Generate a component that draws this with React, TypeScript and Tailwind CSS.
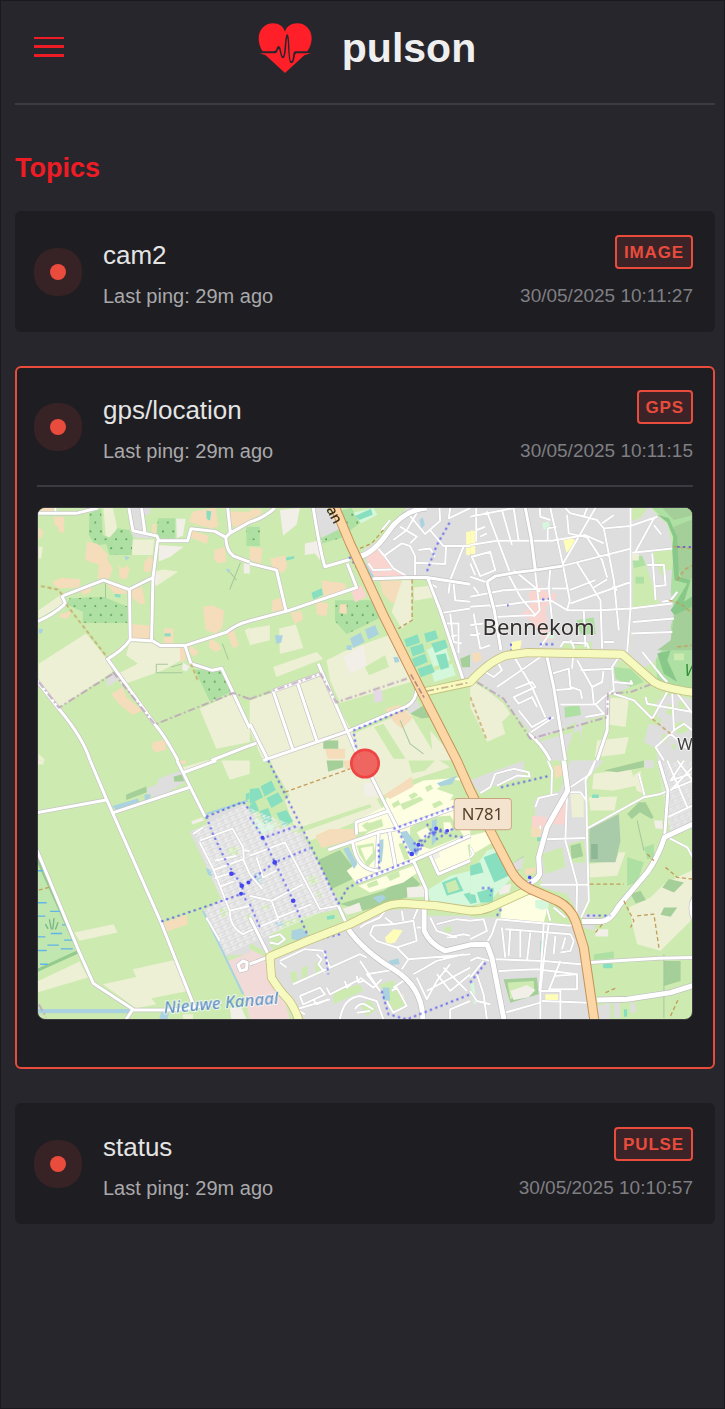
import { useState } from "react";

const FARM = "#edf0d5";
const GREY = "#dfdedf";
const YARD = "#f5dcba";
const ORCHARD = "#aedfa3";
const WOOD = "#a5cf98";
const PITCH = "#88dfc0";
const PARK = "#d5f7dc";
const CAMPUS = "#fefee3";
const WATER = "#aad3df";
const RETAIL = "#fad5d0";
const ESTATE = "#f2dad9";
const PALE = "#f2efe9";
const GRASS = "#cdebb0";

type Tile = {
  x: number;
  y: number;
  areas: [string, string][];
  streets: string[];
  roads: string[];
  cycle: string[];
  border: string[];
  track: string[];
};

const tiles: Tile[] = [
  {
    x: 0,
    y: 0,
    areas: [
      [FARM, "M28 490 170 400 235 480 250 515 90 622 28 545ZM300 425 370 430 390 440 465 440 455 480 400 510 275 555 265 520 325 490 290 465ZM222 24h28l12 55-8 32h-25ZM308 118h66l-5 47h-61ZM28 330 100 280 105 310 28 355ZM375 215 400 208 446 214 380 258ZM510 625 610 580 660 690V725L560 745ZM28 140h12l-4 35h-8ZM28 760l20 20H28ZM645 390l15-8v50Z"],
      [GREY, "M300 24H362V42L345 46 350 92 368 115 315 112 303 92ZM232 535l25-18 12 20-35 22Z"],
      [ORCHARD, "M180 40 215 26 220 105 240 112 265 85 300 90 310 112 306 165H240L230 132 198 136 178 105ZM120 295 220 290 295 320V368H160V335L110 312ZM385 55h52v60h-57ZM495 508 570 505 605 575 540 602ZM650 80h10v58h-10Z"],
      [YARD, "M28 24h45v10H28ZM74 50h30v47H90l-5-17-10-5ZM28 80l14 14-5 20h-9ZM172 125l30 5 35 35-5 12 18 28-10 30h-36l5-40-42-15ZM268 195l12 12 15-12 5 15-10 28-20-5ZM345 185l18-20 8 25-12 28-18-5ZM68 245l28-12 58 4-5 25-65 2ZM150 270l40-12-10 20-18 6ZM230 250l55 18 10 12-40 2ZM305 268l32-8 10 50-15 2-25-20ZM308 372l52 4 10 45-62-4ZM403 385h28v45h-28ZM520 320l28-4 35 15-5 50-20 20-30-12ZM588 388l22-3 17 50-17 10ZM540 415l20 10 16 20-20 10-18-14ZM450 442l18 4v34l-16 5ZM480 432l28 25-15 12-12-12ZM488 35l70-12 8 55-20 8-68-20ZM482 90l55 18-6 24-48-20ZM600 34l60 2v32l-40 15-20-15ZM555 150l30-10 4 45-22 5-15-12ZM245 582l35-22 10 30 48 40-30 14-40-35ZM370 725l38-7v30l-28 8-14-14ZM90 342l38-10-15 25-22-6ZM368 72h12v30h-12Z"],
      [PALE, "M440 56h28l-8 50-18 8ZM387 135l75 5-40 30-34 14ZM642 190h18v30h-18ZM375 218l18 8-18 32ZM458 485l22 14-10 14-12-4Z"],
      [PITCH, "M530 32l15 2-4 28-10-6ZM256 281l18 2-2 10-16-3ZM405 399h18v10h-18Z"],
      [WATER, "M285 168l16 4-12 9ZM28 385l14 2-5 12h-9ZM588 205l14 4-6 10Z"],
    ],
    streets: ["M78 24V38"],
    roads: [
      "M20 40H140L205 24",
      "M298 24 310 92 382 108 388 122H474L484 86 556 94 588 112 600 100 660 66",
      "M336 24 346 98",
      "M594 24 602 100",
      "M588 112Q590 155 612 168L660 186",
      "M384 122 370 235 366 420",
      "M20 366Q70 345 108 310L98 288 222 240 298 268 370 232",
      "M300 268 302 418 370 422 392 436H466L590 396Q620 372 660 362",
      "M302 418Q280 450 234 476L376 672Q405 705 445 780",
      "M466 436 484 490 548 510 576 504 660 684",
      "M20 538 88 625Q160 710 182 780",
      "M545 780 660 735",
    ],
    cycle: [],
    border: ["M28 545 88 622 250 520", "M250 515 376 672 610 578 660 596"],
    track: ["M35 258 85 268 100 285", "M110 312 234 472", "M484 490 506 545"],
  },
  {
    x: 660,
    y: 0,
    areas: [
      [FARM, "M0 385l60-10 0 45-60 15ZM88 385l50-12 22 70-70 18ZM70 500l130-45 20 20-140 55ZM0 600 190 530 215 520 260 610 310 700 340 780H40L0 690ZM230 480l60-30 140-50 70 140-230 68-30-70ZM310 700l165-70 90 150H330ZM540 690l80 90h-70Z"],
      [GRASS, "M300 610 430 560 435 590 370 625 310 620ZM345 500l60-35 12 35-60 25ZM400 310l30-5 15 25-30 10ZM372 680l28-10 70 110h-36Z"],
      [ORCHARD, "M0 80h30v58H0ZM255 300l120 0 20 50-105 52-35-40ZM215 100l60-34 22 40-85 26ZM260 34l45-10 25 45-38 28Z"],
      [GREY, "M190 24h40l45 60-60 30ZM470 24H660V560L640 535 550 300 530 235 360 238 340 150 400 110 440 58ZM470 610l30-10 15 30-40 10Z"],
      [YARD, "M0 28l35 0 0 15-35 15ZM0 140l38 5-5 45-33-10ZM62 175l45-8 5 35-15 18-32-22ZM215 240l70 10 5 20-70 20ZM200 305l35 5-5 38-30-5ZM68 300l25-8 18 35-45 8ZM122 338l32-6 6 25-25 14ZM405 625l45-12 38 40-32 32-25-20ZM225 745l60 0 0 35h-50ZM270 312l20 0 0 30-22-4Z"],
      [RETAIL, "M305 275l30-20 15 35-35 16ZM350 165l30-20 50 55 40 28-110 4Z"],
      [PALE, "M90 30l60-6-10 50-40 32ZM165 130l50-10-5 60-15-20-30 5ZM280 470l60-35 10 60-50 25ZM440 24l-15 20-18 24Z"],
      [PARK, "M310 38l60-14 12 20-48 26Z"],
      [PITCH, "M315 48l48-22 5 18-40 16ZM185 278l30-14 5 20-30 14ZM108 172l25-4v8l-24 5Z"],
      [WATER, "M300 415l32-18 12 28-34 18ZM345 388l30-14 12 28-32 16ZM290 435h15v14h-15ZM335 190l8-5 30 45-8 5ZM508 60l10-8 6 22-10 12ZM75 405l24 0-5 22-14 4ZM430 470l14 0 4 15-14 2Z"],
      ["#e5d9e6", "M370 572l26-4 2 34-24 6Z"],
      [WOOD, "M480 640l40-25 25 35-30 4ZM630 475l30-12v38h-25ZM220 720h45v25h-45Z"],
      [GRASS, "M390 240h150l35 90 60 200-85 12-60-100-40-60-30-80Z"],
      [YARD, "M390 242l64 0 2 55-30 12-28-30Z"],
      [FARM, "M456 240h29v120l-30 25-30-50ZM490 262l50-5 8 35-55 10Z"],
      [PARK, "M545 515l60-25 12 35-65 20ZM530 450l50-30 20 60-50 20Z"],
      [PITCH, "M462 418l40-16 8 25-40 14ZM480 442l38-12 6 25-36 14ZM485 475l40-15 8 25-38 16ZM502 505l42-14 10 24-42 16ZM522 400l34-10 8 25-35 12ZM543 430l42-12 8 24-38 16ZM557 465l30-6 10 42-25 8Z"],
      [GRASS, "M530 580 660 560V780H630Z"],
      ["#fefeb8", "M648 95h12v70h-12Z"],
    ],
    streets: [
      "M405 165 455 130 480 138 495 168V225",
      "M380 140 405 170 430 205 470 228",
      "M355 190 370 210 425 208",
      "M395 90 420 60",
      "M478 45 525 102 570 62 568 24",
      "M495 188 585 192 588 135",
      "M540 90 580 138H660",
      "M500 40 470 90 430 120",
      "M600 24 596 55 660 24",
      "M640 140 600 240 595 280",
      "M610 245 615 300 660 305",
      "M575 338 660 325",
      "M600 340 610 425 635 430",
      "M590 370H625V458",
      "M595 410 620 405",
      "M540 250 560 262",
      "M450 80 500 110 480 130",
      "M505 150 540 145 555 170",
    ],
    roads: [
      "M0 66Q40 55 75 24",
      "M190 24Q210 150 225 200L300 178",
      "M0 190 80 210 108 330",
      "M0 362 120 330 320 262 292 190",
      "M368 236 470 232 530 232 660 252",
      "M532 232 570 330 638 535",
      "M205 490 330 780",
      "M70 572 215 520",
      "M70 572 130 750",
      "M142 545 202 725",
      "M0 670 55 780",
      "M0 735 20 728",
      "M40 780 295 692 470 618Q500 600 500 560",
    ],
    cycle: ["M598 68 560 135 530 215", "M310 690 470 625", "M312 700 320 750", "M298 170 390 295"],
    border: ["M0 596 212 520 258 606 470 535", "M480 520 520 590"],
    track: ["M486 238V360L445 385", "M330 145 365 130 400 90"],
  },
  {
    x: 1320,
    y: 0,
    areas: [
      [GREY, "M0 24H480V560L415 585 410 645 330 660 200 720 100 600 20 540 0 545Z"],
      [GREY, "M480 24h60l50 50 20 75-5 120 15 80-22 110-118 65ZM320 660h90l-30 120h-100ZM200 725l40 55 100 0-10-90Z"],
      [ORCHARD, "M545 24H670V580L560 540 555 480 575 445 605 430 600 380 612 330 600 275 608 160 610 120 590 70Z"],
      [WOOD, "M575 24h95v20L610 60ZM610 80 670 56V230L640 250 612 180ZM610 350 670 286V450H560L600 420Z"],
      ["#88c888", "M560 44 590 66 608 110 604 150 612 240 650 250 620 300 600 330 612 345 670 316V285L640 305 660 240 625 230 620 110 595 55ZM560 460 600 450 590 480 620 545 580 520Z"],
      [GRASS, "M480 24h50l-20 30-28 10ZM545 150h60v60h-20l-10 20-20-40ZM487 190l35-10 30 90 15 40-80 15ZM275 425h90v35h-90ZM610 460h30v20h-30ZM440 480l40 10 50 50-30 20-60-20ZM335 670l80-20 30-65 60 10 50 60 0 85-40 40H335Z"],
      [ORCHARD, "M485 172l30-6 10 30-35 8ZM495 230h25v20h-25ZM430 500l50 5 40 40-40 15-45-25ZM318 360l52-8 6 50h-45ZM282 620l45-6 5 30-48 8Z"],
      [FARM, "M0 540 50 570 100 610 120 640 95 665 105 700 50 725 20 660 0 620ZM420 592l55 3-10 85-50-8ZM380 720l95-10-12 50-90 10ZM485 160l20-4v25h-20Z"],
      [GRASS, "M0 640 55 730 105 705 200 725 240 780H0Z"],
      [RETAIL, "M145 345l35-20-5-45 30-25 30 25 25 0-10 25-25 15 5 60 20 35-25 10-50-70ZM170 320l30 5-5 15-25-5Z"],
      ["#fefeb8", "M278 115l18-5 26 14-14 16-20 18ZM122 425l32-5-4 25-26 8ZM0 92h15v70H0Z"],
      [PARK, "M215 70l20-6 5 20-20 6ZM230 395l20 0v20h-20Z"],
      [YARD, "M5 460l25-5 5 25-25 8Z"],
      [GREY, "M535 670l30 5-5 70-40-20ZM560 600l50-20 60 20V780H560Z"],
      [GRASS, "M590 610l25 5-10 30-18-5ZM625 600l22 4-4 26-20-4ZM610 670l30-8 15 30-35 10ZM575 700l20 5-8 22-15-4ZM560 650l14 8-8 20ZM600 730l18 5-8 16Z"],
    ],
    streets: [
      "M0 50 130 24", "M18 24V125", "M50 34 120 220", "M95 30 125 135", "M130 24 145 120",
      "M0 135 80 122H245L345 105 400 130", "M208 24 210 50 240 60", "M240 24 278 195", "M232 120V85L258 80",
      "M285 24 300 40 380 60 400 85 480 78 560 50", "M400 85 430 240 445 390", "M290 45 295 100 350 112 395 180 410 232",
      "M375 24 278 190", "M275 198 482 145", "M182 110 208 330 190 350", "M278 195 298 300 290 330", "M240 205 235 260 245 360",
      "M110 215 150 290 195 345", "M130 210 210 275", "M320 188 390 300 395 445", "M370 262 410 238", "M298 270 375 240",
      "M300 310 482 245", "M0 290 100 270 240 265", "M245 265H295", "M170 305 240 300 290 330 H390L482 325",
      "M480 24V325L470 455", "M482 400 605 395", "M487 365 610 355", "M482 325 605 310", "M545 160 555 300", "M530 195 580 195 585 255 555 258",
      "M485 158 605 145", "M495 155 550 55", "M550 75 572 103", "M575 305 600 300 620 275",
      "M60 320 170 305", "M70 350 190 345", "M0 320 60 315", "M10 340 30 445 60 435", "M0 375 40 370", "M60 250 0 230",
      "M5 170 60 155 75 210 30 228Z", "M0 190 15 225", "M20 90 45 80 M30 110 50 100", "M10 260 25 280", "M135 475 185 560 225 650", "M80 560 210 470",
      "M45 515 70 530 95 510 85 490", "M135 565 185 545 195 560 130 590 145 610 185 590 200 620", "M145 630 185 680 230 655", "M175 700 250 650",
      "M245 520 295 505 300 560 330 570 335 595", "M320 480 365 560 370 610", "M250 570 305 565", "M270 612 375 612 400 590 430 570 425 500 445 470",
      "M330 510 430 505", "M365 560 395 545 400 505", "M375 612 400 640 345 650", "M305 505 310 440 300 420", "M270 440 280 425 350 430 355 445",
      "M400 425H430", "M430 545 485 550 480 540", "M515 455 575 530 590 545", "M430 580 490 600 545 655 590 575", "M525 590 530 610 666 635", "M605 580 610 690",
      "M620 580 666 640", "M610 690 555 740 580 780", "M610 690 640 670 666 690", "M600 700 650 745", "M395 70 430 45", "M340 50 350 24", "M425 260 440 270",
      "M340 330 345 440", "M0 405 30 400", "M210 440 245 390",
    ],
    roads: [
      "M165 24 182 110 195 210",
      "M50 245 75 228 130 218 195 210 275 198",
      "M50 245 72 330 92 450",
      "M230 470 250 560 285 780",
      "M412 590 410 690 380 780",
      "M175 700Q215 730 240 780",
    ],
    cycle: ["M620 140H666", "M235 655 250 650", "M208 432H255", "M122 430V450", "M110 315 115 315", "M215 298 235 296"],
    border: ["M20 545 100 595 180 715 270 690 410 650 412 580 480 575 550 548"],
    track: ["M0 590 50 720", "M610 140 666 145", "M595 300 630 310 666 340", "M620 440 666 435", "M620 240 640 210 666 195", "M545 655 600 700"],
  },
  {
    x: 0,
    y: 780,
    areas: [
      [FARM, "M575 0H660V40L600 58ZM460 20 530 0 555 0 465 35ZM135 515 252 490 264 515 150 540ZM220 670 320 648 310 625 432 598 475 690 365 712 380 730 320 742ZM20 664 150 602 175 650 20 696ZM20 0h23v12H20Z"],
      [GREY, "M350 85 385 70V55L455 30 465 65 385 112 355 102ZM480 212 530 195 535 165 640 130 660 140V580L580 585 520 450 575 415Z"],
      [WOOD, "M290 102 350 78 352 95 290 118ZM432 48l24-6 8 20-30 2Z"],
      [YARD, "M402 485 470 462 475 490 412 512ZM450 0h20v10h-18Z"],
      [ESTATE, "M595 600 660 575V780H700L690 830 660 780 645 700Z"],
      [WATER, "M248 136 325 114 330 126 260 150ZM345 102l20 0-8 16h-12ZM20 744 310 744V757H20ZM528 322l16 6 8 20-16-5ZM395 752l24 5-6 18-24-2Z"],
      ["#c0e7b0", "M20 285 145 570 20 620Z"],
      [PALE, "M485 182 520 170 522 180 488 192ZM600 740h35l15 34h-45Z"],
      [PITCH, "M648 100l12-5v20l-12 4Z"],
      [GRASS, "M590 265l30-10 10 20-25 22ZM570 445l20-5 4 20-20 12ZM650 460l10-5v25h-10Z"],
      [FARM, "M460 760h30v14h-30Z"],
    ],
    streets: [
      "M510 240 608 204 640 260 642 295 552 328 510 245", "M642 268 660 272", "M640 295 660 340", "M556 352 610 335", "M570 378 612 362",
      "M552 328 600 450 660 435", "M600 450Q600 500 640 520L660 510", "M530 470 570 540", "M490 220 520 200 M555 300 620 285",
    ],
    roads: [
      "M182 0 232 118 392 480 495 740",
      "M20 157 230 118",
      "M252 156 480 80",
      "M442 0 526 168",
      "M462 36 560 0",
      "M20 262 148 570 192 668 310 745 290 775",
      "M310 747 420 747 495 740 575 725",
      "M640 600 625 612 632 630 650 625 652 605Z",
    ],
    cycle: ["M395 482 520 440 634 400", "M530 168 640 124 660 150", "M530 168 550 220 588 300 636 375 648 420"],
    border: ["M28 730 50 770"],
    track: ["M28 388 65 378"],
  },
  {
    x: 660,
    y: 780,
    areas: [
      [FARM, "M-5 -5H560L600 20 480 60 380 115 400 150 180 240 130 190 60 -5Z"],
      [GREY, "M0 215 145 195 245 385 280 440 200 460 100 480 60 580 0 545ZM60 600 300 500 400 450 520 440 530 465 660 465V775H130L70 640Z"],
      [GREY, "M0 150l60 70-60 10Z"],
      [ESTATE, "M0 565 50 590 60 650 100 700 120 775H20L0 780Z"],
      [GRASS, "M60 520 200 455 270 460 150 530 60 560ZM120 210 360 130 365 140 140 220ZM190 260l60-10 10 30-60 20ZM0 50l60-45 60 100-60 60-60-40ZM260 420 500 320 520 370 500 410 380 440 280 480Z"],
      [WOOD, "M205 298 270 268 310 320 318 350 245 385ZM270 430l130-40 80-50 30 30-40 40-130 40ZM230 0h50v20l-45 14Z"],
      [PARK, "M15 170 45 190 70 185 75 205 35 222 10 195ZM530 390 600 345 660 330V435L545 430Z"],
      [PITCH, "M0 85 28 82 40 110 0 130ZM32 78 65 60 78 88 45 108ZM50 112 85 95 100 122 65 142ZM0 135 15 120 28 150 0 160ZM28 152 55 142 70 180 45 192ZM80 158 110 148 130 182 100 200Z"],
      [PITCH, "M575 365 620 348 640 390 590 405ZM640 400 660 395V428Z"],
      [GRASS, "M586 368 616 357 628 386 594 397Z"],
      [CAMPUS, "M320 180 400 140 410 110 520 60 640 50 600 120 660 110V250L560 290 520 280 320 370 290 330 330 300 305 250 360 210 320 215ZM325 375 490 315 510 330 460 365 360 395ZM540 290 650 240 660 300 570 335Z"],
      [YARD, "M196 225 240 205 310 205 320 235 215 262ZM400 105 485 48 490 78 420 115ZM280 0h30l10 22-35 5Z"],
      [GRASS, "M475 0h80l-30 30-40 8ZM335 195l60-20 5 22-45 16ZM320 255l50-8 8 45-25 28-25-40ZM480 200l60-30 60-5 40 60-100 40-60-20ZM450 130l60-22 10 10-60 30ZM560 85l40-30 55 10-40 40Z"],
      [CAMPUS, "M332 262l36-6 0 20-20 26ZM500 215l30-16 14 20-30 20ZM580 185l20 0 10 25-28 8Z"],
      [GRASS, "M340 190l14-6 6 10-16 6ZM425 130l20-12 6 14-20 10ZM475 105l18-10 12 8-20 14ZM525 80l16-8 8 12-18 10ZM545 130l24-10 10 10-26 14ZM445 250l14-4 20 50-16 2ZM350 370l30-12 6 14-30 10ZM410 345l36-14 4 16-30 14Z"],
      [WATER, "M280 265 295 258 322 310 312 325ZM385 240 400 235 400 260 395 305 385 300ZM450 215 470 210 510 265 500 285 480 270ZM545 180 560 175 558 240 545 255ZM125 510l30-8 20 20-20 18-30-5ZM560 68l60-22-15 25-35 6ZM368 410l30-8 10 8-20 18ZM75 485l25-4 0 16-18 0ZM15 335l25 5-5 30-20-8ZM415 600l30-8 4 18-25 2ZM398 680l20 0 2 40-20-4Z"],
      [PITCH, "M230 466l24-4 0 12-22 3ZM440 730l20-14 12 20-25 8Z"],
      [PALE, "M278 445l50-20 8 25-45 12ZM470 380l52-4 2 32-52 2ZM340 70l30-5 10 40-35 5ZM540 280l25-8 5 18-22 8Z"],
      ["#fefeb8", "M405 530 430 505 458 508 435 545 410 550ZM438 705l20-6 8 22-22 8Z"],
      [GRASS, "M120 635l20-5 5 35-15 10ZM155 620l20-4-5 40-15 5ZM195 605l18-4 0 38-16 6ZM250 690l80-20 10 20-90 40ZM330 730l30-14 20 30-30 20ZM390 670l40-12 40 80-50 12ZM170 350l25-8 14 20-24 16ZM35 435l18-6 6 12-18 8ZM580 500l20-5 6 16-20 8ZM200 395l12-4 4 18-12 2Z"],
      [WATER, "M398 680l20 0 2 40-20-4Z"],
    ],
    streets: [
      "M0 285 105 245 210 445 265 435", "M0 405 65 420 160 370", "M38 385 0 340", "M65 420 85 475 0 510", "M85 470 185 430", "M20 290 40 350 80 330",
      "M58 530 90 520 105 535 85 550 60 545", "M90 600 165 565 220 570", "M110 620 90 605", "M130 670 330 580 350 590", "M200 580 215 595 205 610 225 635", "M220 570 240 620",
      "M150 705 210 680 225 700 160 730 150 705", "M190 715 200 730 235 715", "M230 680 240 700 330 655", "M165 760 140 745 240 715",
      "M270 775Q280 710 330 705L380 720 400 775", "M315 745Q325 725 345 730L370 745", "M320 755 360 750", "M330 600 390 690 350 640 440 625", "M330 650 370 680 395 655",
      "M285 660 290 680 305 670 M320 645 325 665 345 658", "M330 500 345 490 390 470 405 450", "M360 520 370 495 430 490 490 480 500 540 440 560 380 540 360 520",
      "M430 490 405 470", "M500 500 520 500", "M440 560 475 595 455 625", "M475 595 660 580", "M490 640 560 600 640 580", "M500 650 530 715 560 660 600 610", "M530 690 660 620",
      "M560 640 600 690 660 640", "M580 620 650 690", "M600 775V745L660 720", "M540 470 560 510 620 530", "M560 490 620 475 660 480", "M590 530 640 520 660 525",
      "M425 690 440 680 470 735 430 755 410 720", "M460 660 430 680", "M505 440 490 475", "M455 450 460 480",
    ],
    roads: [
      "M365 50 440 200",
      "M235 268 385 215 440 205 660 125",
      "M320 222 318 185 412 152",
      "M308 245Q320 330 385 330",
      "M385 215 380 320",
      "M418 215 436 315",
      "M320 365 490 300 660 225",
      "M490 300 528 385 530 430",
      "M540 285 565 340 660 300",
      "M265 435 290 490",
      "M0 470 60 590",
      "M0 610 50 590",
    ],
    cycle: [
      "M55 0 100 90 180 250 265 430", "M0 170 40 232 145 195", "M40 232 75 305 130 420 180 540", "M0 360 75 305 180 262", "M265 430 290 385 330 360", "M330 360 480 300", "M430 205 540 165 660 120",
      "M445 210 480 285 530 220 640 200", "M500 270 560 200 600 225 640 230", "M385 250 388 330", "M0 430 30 500", "M225 570 235 640", "M270 520 180 540 M395 690 415 760 470 775 660 700",
      "M490 250 510 240 520 260 480 280", "M530 190 560 235 600 210 M550 215 620 205",
    ],
    border: [],
    track: ["M105 95 300 25"],
  },
  {
    x: 1320,
    y: 780,
    areas: [
      [GREY, "M190 120 270 90 300 0H400L345 60 355 400 330 470 290 400 215 380 205 240ZM0 470 90 470 300 490 330 540 370 775H0ZM560 0H670V190L600 230 590 100ZM340 460l40 0-10 50-30-10ZM360 740l60-15 0 50h-50Z"],
      [GRASS, "M295 250l45-12 8 68-50 0ZM215 280l60-20 10 60-60 20Z"],
      [RETAIL, "M185 165l45 5-5 28-40 5ZM262 130l30-10-5 72h-38Z"],
      [YARD, "M182 198l35 2-8 30-26-2ZM250 15h30l-5 30-20 10ZM165 325l32-5-5 18-28 5Z"],
      [GREY, "M0 60 50 40 160 0V50L60 80 30 100ZM520 0h30l0 20-25 5Z"],
      [FARM, "M370 40 480 25 500 75 430 90 365 85ZM355 110 440 108 432 150 360 150ZM300 100h40v70h-35ZM357 310 435 300 445 275 465 275 440 345 357 350ZM475 440 540 410 580 370 670 326V470L570 570 500 550 490 510ZM490 45l20-15 10 70-22-10Z"],
      ["#aacbaa", "M357 205 445 160 450 240 435 305 357 305Z"],
      ["#8db796", "M362 250h20v45h-20Z"],
      [WOOD, "M400 30 520 0 520 20 440 35ZM300 255l30-8 8 40-34 8ZM470 160l35-35 20 0 24 45-6 5-35-20-24 20ZM575 380l20-25 45 10-30 30ZM480 400l30-10 16 28-30 10ZM580 440l40 0-20 28-30-6ZM100 655 200 650 205 700 120 725ZM580 600l50 0 0 60-50 15ZM125 310l35-25-8 40-20 10Z"],
      [GREY, "M125 310l35-22-5 36-22 6Z"],
      [GRASS, "M112 665 190 660 192 690 120 715Z"],
      [PALE, "M120 690l50-18 25 15-20 22-45 8ZM375 505l38 0 0 22h-38ZM550 180l25 0 2 25-22-2ZM85 375l38-5-6 25-30 8Z"],
      [CAMPUS, "M0 225 60 210 75 240 0 285ZM95 430 160 395 210 400 235 430 220 485 90 480Z"],
      [PARK, "M0 340 50 270 80 260 125 350 60 420 0 435ZM195 418h40v24l-20 6-20-8ZM0 670l10-5 10 60-8 5Z"],
      [PITCH, "M40 290 80 275 115 345 72 365ZM0 315 30 305 40 335 0 345ZM20 395 70 380 68 425 30 425ZM0 400 15 402 20 425 0 430ZM365 102h20v10h-20ZM398 608h28v14h-28ZM460 745h10v22h-10ZM210 540h8v35h-8ZM200 230h14v12h-14Z"],
      ["#fefeb8", "M225 700h38v18h-38Z"],
      [ORCHARD, "M520 260l30-10 0 45-20 0ZM470 290l50 15-20 60-30 10ZM370 580l60-8 0 20-60 5Z"],
      [GREY, "M430 720h18v50h-18ZM480 725h15v30h-15ZM345 290h10v50h-10Z"],
    ],
    streets: [
      "M30 98 60 80 75 40 130 25 175 35 178 48 140 45 80 75", "M232 0 245 30 243 105", "M195 140 205 112 262 100", "M210 205V195",
      "M228 236 345 232", "M210 372H352", "M290 95 285 240 320 370 318 470", "M290 95 330 95 348 120 350 235 355 420 332 470", "M300 80 360 40 375 0", "M348 205 520 110 570 100 666 60",
      "M505 40 522 105", "M348 120 345 60 375 0", "M592 230 650 260 666 290", "M640 0 600 60 660 40", "M590 0 650 140", "M600 90 666 20", "M590 170 666 135", "M620 0 666 60",
      "M0 480 40 475 50 510 0 535", "M80 475 65 520 50 545", "M80 475 300 495", "M95 500 105 590", "M120 505 115 585 M150 510V590 M180 515 170 600", "M105 505 300 520 310 540 300 570 270 575",
      "M220 490 208 690 M235 490 225 560 210 690", "M75 595 220 600 330 610 358 605", "M85 630 200 625 320 640V685H240", "M210 775V690H270V775", "M215 720 355 725", "M255 525 250 580 M285 530 275 565",
      "M270 600 235 690", "M250 645 320 640", "M0 600 20 590 60 600", "M20 640 40 700 50 775 M0 690 20 720 60 730", "M0 650 40 600", "M105 755 210 725", "M300 495 320 480", "M230 445 240 480 M250 440 285 470 M265 430 290 455", "M0 290 10 280 0 260",
    ],
    roads: [
      "M565 0 592 90 582 230",
      "M360 605 430 600 565 592 676 590",
      "M676 400Q645 440 676 490",
    ],
    cycle: ["M92 80 240 45", "M350 464H420", "M0 665 50 600", "M35 382H65L60 405", "M80 465 95 440", "M178 345 182 400"],
    border: [],
    track: ["M460 420 490 480 480 500", "M500 465 550 460 565 560", "M358 370H460", "M375 515 400 485", "M530 280 550 300", "M585 320 620 350 666 355", "M600 765 625 710", "M405 695 440 680"],
  },
];

const mainStreets = [
  "M990 168Q1030 160 1075 95T1190 24",
  "M1600 780 1612 870 1550 980 1525 1070 1528 1120Q1520 1140 1490 1150",
  "M1655 1262 1710 1262Q1740 1262 1765 1215L1850 1115Q1880 1075 1902 1010L1996 966",
  "M1700 1497 1790 1495 1920 1475 1996 1451",
  "M955 1285Q1000 1350 1090 1405T1178 1560",
  "M1182 1220 1182 1290Q1200 1330 1245 1350L1320 1332 1370 1330 1385 1370 1422 1560",
];

const trunk =
  "M912 14 960 130 1060 345 1175 575 1280 780 1320 870 1380 990 1445 1115Q1465 1148 1500 1165L1580 1200Q1620 1220 1635 1260L1660 1340 1692 1560";
const yellowRoads = [
  "M1180 575 1320 545Q1380 480 1430 465L1490 457 1775 462 1870 545Q1900 565 1996 577",
  "M808 1560Q790 1510 770 1490T725 1430L720 1367 820 1325 960 1270 1050 1225Q1080 1208 1120 1208L1220 1215 1320 1230Q1350 1232 1380 1220L1500 1165",
];

const reedMarks =
  "M24 330h18M24 426h28M62 452h32M24 466h24M98 492h12M64 518h34M24 528h24M104 538h26M54 553h34M94 564h36M24 569h28M32 610h24";

function each(key: "streets" | "roads" | "cycle" | "border" | "track") {
  return tiles.map((t) => (
    <path key={`${t.x}-${t.y}`} transform={`translate(${t.x} ${t.y})`} d={t[key].join("")} />
  ));
}

function LocationMap() {
  return (
    <svg
      viewBox="24 24 1962 1530"
      preserveAspectRatio="xMidYMid slice"
      className="block aspect-[654/511] w-full"
      role="img"
      aria-label="Map"
      fill="none"
      strokeLinejoin="round"
    >
      <defs>
        <pattern id="trees" width="31" height="50" patternUnits="userSpaceOnUse" x="14" y="20">
          <circle cx="14" cy="24" r="3" fill="#4f9a4a" />
          <circle cx="29" cy="48" r="3" fill="#4f9a4a" />
        </pattern>
        <pattern id="lanes" width="22" height="17" patternUnits="userSpaceOnUse" patternTransform="rotate(-24)">
          <path d="M0 2H22M3 2V10M14 8V17M8 11H22" stroke="#f1f1f1" strokeWidth="3" />
          <path d="M0 6H12" stroke="#cfcdce" strokeWidth="2" />
        </pattern>
      </defs>
      <rect x="0" y="0" width="2010" height="1570" fill={GRASS} />
      {tiles.map((t) => (
        <g key={`${t.x}-${t.y}`} transform={`translate(${t.x} ${t.y})`}>
          {t.areas.map(([color, d], i) => (
            <g key={i}>
              <path d={d} fill={color} />
              {color === ORCHARD && t.x < 1000 && <path d={d} fill="url(#trees)" />}
            </g>
          ))}
        </g>
      ))}
      <path
        d="M490 990 640 915 805 980 905 1165 930 1220 860 1240 700 1310 580 1365 520 1230 575 1195Z"
        fill="url(#lanes)"
      />
      <path d="M1880 790l106-10v180l-70 30Z" fill="url(#lanes)" opacity=".6" />
      <path d="M20 1065 148 1352 20 1410" stroke="#93ca8e" strokeWidth="10" />
      <path d={reedMarks} transform="translate(0 780)" stroke="#62b3e6" strokeWidth="4" />
      <path d="M48 1270 56 1284M60 1256 66 1286M74 1252 70 1286M86 1264 78 1286" stroke="#79b586" strokeWidth="4" />
      <path d="M520 1230 640 1480M530 940 655 900" stroke={WATER} strokeWidth="6" />
      <g stroke="#a5c79c" strokeWidth="3">
        <path d="M380 492h35M380 517h78M380 492v25M425 500l35-10M228 240v55M578 430l18 48M600 268l32-80M600 215l20 25" />
        <path d="M1110 660 1140 730 1180 760M1820 960l20 90M1900 1360v190" />
      </g>

      <g stroke="#cdcbcc" strokeWidth="8">{each("streets")}</g>
      <g stroke="#fff" strokeWidth="6">{each("streets")}</g>
      <g stroke="#c6c4c5" strokeWidth="13">{each("roads")}</g>
      <g stroke="#fff" strokeWidth="9">{each("roads")}</g>
      <path d={mainStreets.join("")} stroke="#c2c0c1" strokeWidth="19" />
      <path d={mainStreets.join("")} stroke="#fff" strokeWidth="15" />
      <g stroke="#b99fb9" strokeWidth="6" strokeDasharray="22 8 6 8" opacity=".8">{each("border")}</g>
      <g stroke="#c39c58" strokeWidth="4" strokeDasharray="12 8">{each("track")}</g>
      <g stroke="#5358ee" strokeWidth="6" strokeDasharray="7 10" opacity=".85">{each("cycle")}</g>
      <g fill="#4444f0">
        <circle cx="605" cy="1119" r="7" />
        <circle cx="636" cy="1155" r="7" />
        <circle cx="634" cy="1179" r="6" />
        <circle cx="656" cy="1145" r="6" />
        <circle cx="735" cy="1085" r="7" />
        <circle cx="698" cy="1011" r="6" />
        <circle cx="790" cy="1200" r="7" />
        <circle cx="1145" cy="1060" r="7" />
        <circle cx="1165" cy="1032" r="6" />
        <circle cx="1218" cy="984" r="6" />
        <circle cx="1252" cy="990" r="5" />
        <circle cx="1498" cy="1130" r="5" />
      </g>

      <path d={yellowRoads.join("")} stroke="#c5c080" strokeWidth="27" />
      <path d={yellowRoads.join("")} stroke="#f7fabf" strokeWidth="22" />
      <path d="M1190 572 1320 546" stroke="#c9b088" strokeWidth="5" strokeDasharray="22 8 6 8" />
      <path d={trunk} stroke="#c4935a" strokeWidth="30" />
      <path d={trunk} stroke="#fcd6a4" strokeWidth="24" />
      <path d="M1142 522 1182 592" stroke="#b58f85" strokeWidth="5" strokeDasharray="18 6" />

      <g className="font-['Noto_Sans',sans-serif]" paintOrder="stroke" strokeLinejoin="round">
        <text x="1357" y="405" fontSize="66" fill="#33302f" stroke="#f4f2f2" strokeOpacity=".6" strokeWidth="6">
          Bennekom
        </text>
        <text x="1940" y="750" fontSize="50" fill="#444" stroke="#fff" strokeOpacity=".6" strokeWidth="6">
          W
        </text>
        <text x="1962" y="526" fontSize="50" fontStyle="italic" fill="#2f8f35">
          W
        </text>
        <text transform="translate(888 28) rotate(62)" fontSize="44" fontWeight="500" fill="#3d2c18">
          an
        </text>
        <text
          transform="translate(404 1538) rotate(-5)"
          fontSize="51"
          fontStyle="italic"
          fontWeight="500"
          fill="#6394c2"
          stroke="#fff"
          strokeOpacity=".7"
          strokeWidth="6"
        >
          Nieuwe Kanaal
        </text>
        <rect x="1273" y="895" width="169" height="91" rx="9" fill="#f4e3cf" stroke="#c8a37c" strokeWidth="5" />
        <text x="1295" y="958" fontSize="50" fill="#55402a">
          N781
        </text>
      </g>
      <circle cx="1005" cy="789" r="41" fill="#ef4444" fillOpacity=".8" stroke="#ef4444" strokeWidth="8" />
    </svg>
  );
}

function HeartLogo() {
  return (
    <svg viewBox="0 0 160 150" className="h-[50px] w-[54px] shrink-0" aria-hidden="true">
      <path
        d="M80 26C75 10 62 1 44 1 20 1 1 20 1 46 1 62 6 76 13 85H46C56 85 54 69 61 69 69 69 69 100 74 100 80 100 78 34 87 34 96 34 91 115 99 115 106 115 102 85 110 85H147C154 75 160 62 160 46 160 20 141 1 117 1 99 1 85 10 80 26Z"
        fill="#ff1f29"
      />
      <path
        d="M4 91H48C60 91 56 78 61 78 65 78 66 106 74 106 86 106 83 46 87 46 90 46 88 121 99 121 111 121 107 91 114 91H158L138 97 80 150 22 97Z"
        fill="#ff1f29"
      />
    </svg>
  );
}

type Topic = { name: string; kind: string; ping: string; time: string; map?: boolean };

const topics: Topic[] = [
  { name: "cam2", kind: "IMAGE", ping: "29m ago", time: "30/05/2025 10:11:27" },
  { name: "gps/location", kind: "GPS", ping: "29m ago", time: "30/05/2025 10:11:15", map: true },
  { name: "status", kind: "PULSE", ping: "29m ago", time: "30/05/2025 10:10:57" },
];

function TopicCard({ topic, open, onToggle }: { topic: Topic; open: boolean; onToggle: () => void }) {
  return (
    <li
      className={`rounded-md border-2 bg-[#1e1d22] px-5 pt-[22px] pb-5 ${
        open ? "border-[#e94b3c]" : "border-transparent"
      }`}
    >
      <button type="button" aria-expanded={open} onClick={onToggle} className="flex w-full items-end pl-[13px] text-left">
        <span className="mr-[37px] mb-[30px] size-4 shrink-0 rounded-full bg-[#e94b3c] shadow-[0_0_0_16px_#372225]" />
        <span className="flex min-w-0 flex-1 flex-col gap-[9px]">
          <span className="truncate text-[26px] leading-9 text-[#e4e4e4]">{topic.name}</span>
          <span className="text-[20px] leading-7 text-[#a9a9ab]">Last ping: {topic.ping}</span>
        </span>
        <span className="flex flex-col items-end gap-[13px]">
          <span className="rounded border-2 border-[#e94b3c] bg-[#3b2327] px-[7px] pt-px text-[17px] leading-[29px] font-bold tracking-wider text-[#e94b3c]">
            {topic.kind}
          </span>
          <span className="text-[19px] leading-7 text-[#7f7f82]">{topic.time}</span>
        </span>
      </button>
      {open && topic.map && (
        <div className="mt-5 mb-[27px] border-t-2 border-[#3b3a41] pt-5">
          <div className="overflow-hidden rounded-lg border border-[#3b3a41]">
            <LocationMap />
          </div>
        </div>
      )}
    </li>
  );
}

export default function App() {
  const [open, setOpen] = useState<string | null>("gps/location");
  return (
    <div className="min-h-screen border border-[#1a191d] bg-[#27262c] pr-[9px] pl-[14px] font-['Liberation_Sans',Arial,sans-serif]">
      <header className="grid grid-cols-[1fr_auto_1fr] items-center border-b-2 border-[#3b3a41] pt-[22px] pb-[30px]">
        <button type="button" aria-label="Menu" className="ml-[19px] w-[30px] text-[#ee1c25]">
          <svg viewBox="0 0 30 24" className="block h-6 w-[30px]" fill="currentColor" aria-hidden="true">
            <path d="M0 1h30v2H0zM0 9h30v3H0zM0 18h30v3H0z" />
          </svg>
        </button>
        <div className="flex items-center gap-[30px] pl-1">
          <HeartLogo />
          <h1 className="text-[41px] leading-[50px] font-bold text-[#efefef]">pulson</h1>
        </div>
      </header>
      <main>
        <h2 className="mt-[47px] mb-[27px] text-[27px] leading-8 font-bold text-[#ee1c25]">Topics</h2>
        <ul className="flex flex-col gap-[34px]">
          {topics.map((t) => (
            <TopicCard
              key={t.name}
              topic={t}
              open={open === t.name}
              onToggle={() => setOpen(open === t.name ? null : t.name)}
            />
          ))}
        </ul>
      </main>
    </div>
  );
}
